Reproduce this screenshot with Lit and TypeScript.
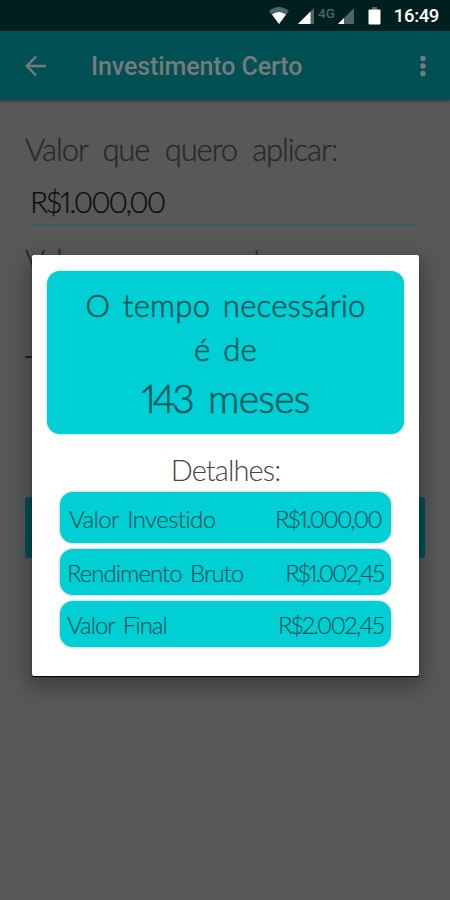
import { LitElement, html, css } from "lit";
import { customElement } from "lit/decorators.js";

@customElement("app-root")
class AppRoot extends LitElement {
  static styles = css`
    :host {
      display: flex; flex-direction: column; position: relative;
      width: 450px; height: 900px; overflow: hidden; background: #585858;
      font-family: Lato, "Open Sans", sans-serif; font-weight: 300;
      font-variant-ligatures: none; font-variant-numeric: proportional-nums;
    }
    * { box-sizing: border-box; }
    .t { display: block; white-space: pre; }
    .status {
      height: 31px; flex: none; background: #001f1e; display: flex;
      justify-content: flex-end; padding: 0 11px 0 0; color: #fff;
    }
    .status svg { display: block; flex: none; }
    .clock { font: 500 18.5px/33px Roboto, sans-serif; margin-left: 10px; letter-spacing: -0.35px; }
    .bar {
      height: 69px; flex: none; background: #005054; display: flex; align-items: center;
      box-shadow: 0 1px 3px #333; color: #777a7c; padding: 2px 18px 0 20px;
    }
    .title { font: 500 25px/36px Roboto, sans-serif; margin-left: 39px; flex: 1; letter-spacing: -0.1px; }
    .form { display: flex; flex-direction: column; padding: 29px 25px 0; color: #292929; }
    .label { font-size: 31px; line-height: 40px; letter-spacing: -1.1px; word-spacing: 8px; -webkit-text-stroke: 0.3px; }
    .input {
      margin: 12px 6px 0 5px; height: 45px; border-bottom: 2px solid #3e5a60; color: #0c0c0c;
      font-size: 30px; line-height: 41px; letter-spacing: -2.1px; -webkit-text-stroke: 0.2px;
    }
    .next { margin-top: 14px; }
    .dash { width: 8px; height: 2px; background: #222; margin-top: 76px; }
    .button { height: 61px; margin-top: 139px; background: #005054; border-radius: 2px; }
    .dialog {
      position: absolute; left: 32px; top: 255px; width: 387px; height: 421px; background: #fff;
      border-radius: 2px; box-shadow: 0 1px 1px #000, 0 8px 20px 4px rgba(0,0,0,.3);
      padding: 16px 15px 0; display: flex; flex-direction: column;
    }
    .card {
      height: 163px; border-radius: 13px; background: #00d0d4; color: #075a60;
      box-shadow: 0 0 2px #8bc9cc; display: flex; flex-direction: column; align-items: center;
      padding-top: 12px; -webkit-text-stroke: 0.6px;
    }
    .line { font-size: 31px; line-height: 44px; letter-spacing: 0.25px; word-spacing: 4px; }
    .months { font-size: 39px; line-height: 55px; letter-spacing: -0.7px; word-spacing: 7px; }
    .count { letter-spacing: -3.5px; }
    .details { font-size: 29px; line-height: 36px; margin: 18px 0 4px; text-align: center; color: #444; letter-spacing: -0.9px; }
    .rows { display: flex; flex-direction: column; gap: 6px; padding: 0 13px; }
    .row {
      height: 46px; border-radius: 13px; background: #00d0d4; color: #07535a;
      box-shadow: 0 0 3px #9aa; display: flex; align-items: center; justify-content: space-between;
      padding: 0 8px 0 7px; font-size: 24px; letter-spacing: -1px; word-spacing: 3px;
      -webkit-text-stroke: 0.15px;
    }
    .first { height: 51px; padding: 1px 10px 0 9px; letter-spacing: -0.6px; }
    .amount { letter-spacing: -1.8px; }
    .yield { letter-spacing: -2.1px; }
    .invested { letter-spacing: -1.8px; }
  `;

  render() {
    return html`
      <div class="status">
        <svg width="115" height="31" viewBox="0 0 115 31">
          <path d="M0 11Q10 3 20 11L10 24Z" fill="#4c6663"/><path d="M3 14.500Q10 9.500 17 14.500L10 24Z" fill="#fff"/>
          <path d="M45 8V24H29Z" fill="#4c6663"/><path d="M41.500 11.500V24H29Z" fill="#fff"/>
          <text x="49" y="17.500" font-family="Roboto" font-weight="500" font-size="13.500" fill="#4c6663">4G</text>
          <path d="M85 8V24H69Z" fill="#4c6663"/><path d="M75 18V24H69Z" fill="#fff"/>
          <path d="M103 7H108V10H103Z" fill="#4c6663"/><rect x="99.500" y="9.500" width="12" height="15" rx="1" fill="#fff"/>
        </svg>
        <span class="clock">16:49</span>
      </div>
      <div class="bar">
        <svg width="32" height="32" viewBox="0 0 32 32" fill="none" stroke="currentColor" stroke-width="2.400"><path d="M26 15H7M16 5.500L6.800 15L16 24.500"/></svg>
        <span class="t title">Investimento Certo</span>
        <svg width="18" height="24" viewBox="0 0 18 24" fill="currentColor"><circle cx="9" cy="3.500" r="2.700"/><circle cx="9" cy="11" r="2.700"/><circle cx="9" cy="18.500" r="2.700"/></svg>
      </div>
      <div class="form">
        <span class="t label">Valor que quero aplicar:</span>
        <span class="t input">R$1.000,00</span>
        <span class="t label next">Valor que quero ter:</span>
        <div class="dash"></div>
        <div class="button"></div>
      </div>
      <div class="dialog">
        <div class="card">
          <span class="t line">O tempo necessário</span>
          <span class="t line">é de</span>
          <span class="t months"><span class="count">143</span> meses</span>
        </div>
        <span class="t details">Detalhes:</span>
        <div class="rows">
          <div class="row first"><span>Valor Investido</span><span class="invested">R$1.000,00</span></div>
          <div class="row"><span>Rendimento Bruto</span><span class="yield">R$1.002,45</span></div>
          <div class="row"><span>Valor Final</span><span class="amount">R$2.002,45</span></div>
        </div>
      </div>`;
  }
}
